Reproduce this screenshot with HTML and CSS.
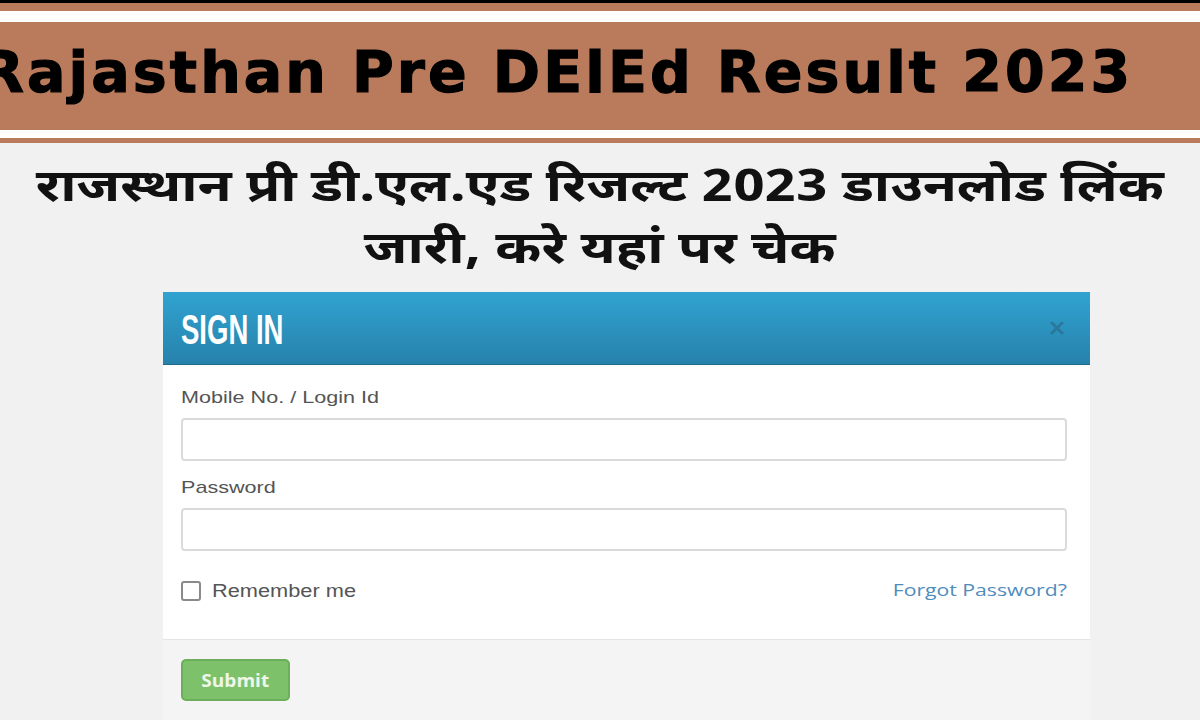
FILE: index.html
```html
<!DOCTYPE html>
<html lang="en">
<head>
<meta charset="utf-8">
<title>Rajasthan Pre DElEd Result 2023</title>
<link rel="stylesheet" href="styles.css">
</head>
<body>
<div class="topline"></div>
<header class="banner">
  <div class="banner-white">
    <div class="banner-inner">
      <h1 class="title">Rajasthan Pre DElEd Result 2023</h1>
    </div>
  </div>
</header>
<div class="hindi-wrap">
  <h2 class="hindi">राजस्थान प्री डी.एल.एड रिजल्ट 2023 डाउनलोड लिंक<br>जारी, करे यहां पर चेक</h2>
</div>
<section class="dialog">
  <div class="dialog-head">
    <span class="dialog-title">SIGN IN</span>
    <svg class="close" width="14" height="14" viewBox="0 0 14 14"><path d="M2 2 L12 12 M12 2 L2 12" stroke="#2a6f92" stroke-width="3" stroke-linecap="round"/></svg>
  </div>
  <div class="dialog-body">
    <label class="label"><span class="wide">Mobile No. / Login Id</span></label>
    <div class="input"></div>
    <label class="label label-gap"><span class="wide">Password</span></label>
    <div class="input"></div>
    <div class="row">
      <span class="check-wrap"><span class="check"></span><span class="remember">Remember me</span></span>
      <a class="forgot">Forgot Password?</a>
    </div>
  </div>
  <div class="dialog-foot">
    <span class="submit"><span class="submit-text">Submit</span></span>
  </div>
</section>
</body>
</html>
```
FILE: styles.css
```css
html, body {
  margin: 0;
  padding: 0;
}
body {
  background: #f1f1f1;
  width: 1200px;
  height: 720px;
  overflow: hidden;
}
.topline {
  height: 3px;
  background: #000;
}
.banner {
  background: #b97b5b;
  padding: 8px 0 5px;
}
.banner-white {
  background: #fff;
  padding: 11px 0 8px;
}
.banner-inner {
  background: #b97b5b;
  height: 108px;
  display: flex;
  align-items: center;
  overflow: hidden;
}
.title {
  margin: -8px 0 0 -20px;
  font-family: "DejaVu Sans", sans-serif;
  font-weight: bold;
  font-size: 57px;
  letter-spacing: 3.1px;
  color: #000;
  -webkit-text-stroke: 1.2px #000;
  white-space: nowrap;
  line-height: 1;
}
.hindi-wrap {
  display: flex;
  justify-content: center;
  padding-top: 16px;
}
.hindi {
  display: inline-block;
  margin: 0;
  text-align: center;
  font-family: "Noto Sans Devanagari", "Noto Sans", sans-serif;
  font-weight: bold;
  font-size: 45px;
  line-height: 62px;
  color: #111;
  transform: scaleX(1.235);
  transform-origin: center top;
  white-space: nowrap;
}
.dialog {
  margin: 9px 0 0 163px;
  width: 927px;
  background: #fff;
}
.dialog-head {
  height: 72px;
  background: linear-gradient(#31a3d1, #2682ab);
  border-bottom: 1px solid #1f6b8e;
  display: flex;
  align-items: center;
  justify-content: space-between;
  padding: 0 26px 0 18px;
}
.dialog-title {
  display: inline-block;
  font-family: "Liberation Sans Narrow", "Liberation Sans", sans-serif;
  font-weight: bold;
  font-size: 43px;
  color: #fff;
  transform: scaleX(0.64);
  transform-origin: left center;
  margin-top: 2px;
}
.close {
  opacity: 0.75;
}
.dialog-body {
  padding: 23px 23px 38px 18px;
}
.label {
  display: block;
  font-family: "Liberation Sans", Arial, sans-serif;
  font-size: 17px;
  line-height: 20px;
  color: #555;
  margin-bottom: 10px;
}
.wide {
  display: inline-block;
  transform: scaleX(1.27);
  transform-origin: left center;
}
.label-gap {
  margin-top: 17px;
}
.input {
  height: 39px;
  border: 2px solid #dadada;
  border-radius: 4px;
  background: #fff;
}
.row {
  margin-top: 30px;
  display: flex;
  justify-content: space-between;
  align-items: center;
  height: 20px;
}
.check-wrap {
  display: flex;
  align-items: center;
}
.check {
  width: 16px;
  height: 16px;
  border: 2px solid #8a8a8a;
  border-radius: 3px;
  margin-right: 11px;
}
.remember {
  display: inline-block;
  font-family: "Liberation Sans", Arial, sans-serif;
  font-size: 18px;
  color: #555;
  transform: scaleX(1.21);
  transform-origin: left center;
}
.forgot {
  display: inline-block;
  font-family: "Open Sans", sans-serif;
  font-size: 17px;
  color: #4f8cbc;
  margin-top: -4px;
  transform: scaleX(1.245);
  transform-origin: right center;
}
.dialog-foot {
  background: #f4f4f4;
  border-top: 1px solid #e4e4e4;
  padding: 19px 18px 30px;
}
.submit {
  display: inline-flex;
  align-items: center;
  justify-content: center;
  width: 105px;
  height: 38px;
  background: #7dc26b;
  border: 2px solid #6cae5b;
  border-radius: 5px;
}
.submit-text {
  display: inline-block;
  font-family: "Open Sans", sans-serif;
  font-weight: bold;
  font-size: 17px;
  color: #eef6ea;
  transform: scaleX(1.12);
}
```
